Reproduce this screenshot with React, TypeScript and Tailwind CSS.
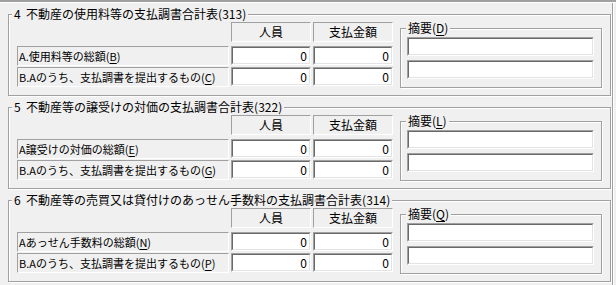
import type { ReactNode } from "react"

interface Group {
    no: string
    title: string
    code: string
    rowA: string
    keyA: string
    keyB: string
    memoKey: string
}

const groups: Group[] = [
    { no: "4", title: "不動産の使用料等の支払調書合計表", code: "313", rowA: "A.使用料等の総額", keyA: "B", keyB: "C", memoKey: "D" },
    { no: "5", title: "不動産等の譲受けの対価の支払調書合計表", code: "322", rowA: "A譲受けの対価の総額", keyA: "E", keyB: "G", memoKey: "L" },
    { no: "6", title: "不動産等の売買又は貸付けのあっせん手数料の支払調書合計表", code: "314", rowA: "Aあっせん手数料の総額", keyA: "N", keyB: "P", memoKey: "Q" },
]

function Mnemonic({ text, letter }: { text: string, letter: string }) {
    return (
        <span className="whitespace-nowrap">
            {text}(<span className="underline underline-offset-2">{letter}</span>)
        </span>
    )
}

function Edit({ value, className }: { value?: string, className?: string }) {
    return (
        <div className={`h-[19px] border border-t-[#a0a0a0] border-l-[#a0a0a0] border-r-white border-b-white ${className ?? ""}`}>
            <div className="h-full border border-t-[#696969] border-l-[#696969] border-r-[#e3e3e3] border-b-[#e3e3e3] bg-white flex items-center justify-end pr-[2px] text-[12px]">
                {value}
            </div>
        </div>
    )
}

function HeaderCell({ children }: { children: ReactNode }) {
    return (
        <div className="w-[80px] h-[20px] border border-t-[#a0a0a0] border-l-[#a0a0a0] border-r-white border-b-white flex items-center justify-center text-[12px]">
            {children}
        </div>
    )
}

function LabelCell({ children }: { children: ReactNode }) {
    return (
        <div className="w-[212px] h-[20px] border border-t-[#a0a0a0] border-l-[#a0a0a0] border-r-white border-b-white flex items-center pl-[1px] text-[11px]">
            {children}
        </div>
    )
}

function GroupBox({ group }: { group: Group }) {
    return (
        <div className="relative h-[82px] border border-[#a0a0a0] shadow-[inset_1px_1px_0_#ffffff,1px_1px_0_#ffffff] px-[8px] pt-[7px] flex">
            <div className="absolute left-[3px] top-[-8px] px-[2px] bg-[#f0f0f0] leading-[14px] whitespace-nowrap text-[12px]">
                {group.no}&nbsp;&nbsp;{group.title}({group.code})
            </div>

            <div className="w-[376px] flex flex-col">
                <div className="flex gap-[2px] justify-end">
                    <HeaderCell>人員</HeaderCell>
                    <HeaderCell>支払金額</HeaderCell>
                </div>
                <div className="mt-[4px] flex flex-col gap-[1px]">
                    <div className="flex gap-[2px]">
                        <LabelCell><Mnemonic text={group.rowA} letter={group.keyA} /></LabelCell>
                        <Edit value="0" className="w-[80px]" />
                        <Edit value="0" className="w-[80px]" />
                    </div>
                    <div className="flex gap-[2px]">
                        <LabelCell><Mnemonic text="B.Aのうち、支払調書を提出するもの" letter={group.keyB} /></LabelCell>
                        <Edit value="0" className="w-[80px]" />
                        <Edit value="0" className="w-[80px]" />
                    </div>
                </div>
            </div>

            <div className="relative ml-[7px] mt-[6px] w-[207px] h-[60px] border border-[#a0a0a0] shadow-[inset_1px_1px_0_#ffffff,1px_1px_0_#ffffff] pl-[6px] pr-[7px] pt-[8px] flex flex-col gap-[4px]">
                <div className="absolute left-[5px] top-[-8px] px-[2px] bg-[#f0f0f0] leading-[14px] text-[12px]">
                    <Mnemonic text="摘要" letter={group.memoKey} />
                </div>
                <Edit />
                <Edit />
            </div>
        </div>
    )
}

export default function App() {
    return (
        <div className="w-[616px] h-[285px] overflow-hidden bg-[#f0f0f0] text-black leading-[14px] font-['Noto_Sans_CJK_JP',sans-serif]">
            <div className="h-[2px] bg-[#a0a0a0]" />
            <div className="h-[1px] bg-white" />
            <div className="flex h-[282px]">
                <div className="w-[613px] border-r border-[#a0a0a0] pl-[8px] pr-[1px] pt-[11px] flex flex-col gap-[11px]">
                    {groups.map((group) => (
                        <GroupBox key={group.no} group={group} />
                    ))}
                </div>
                <div className="w-[1px] bg-white" />
            </div>
        </div>
    )
}
